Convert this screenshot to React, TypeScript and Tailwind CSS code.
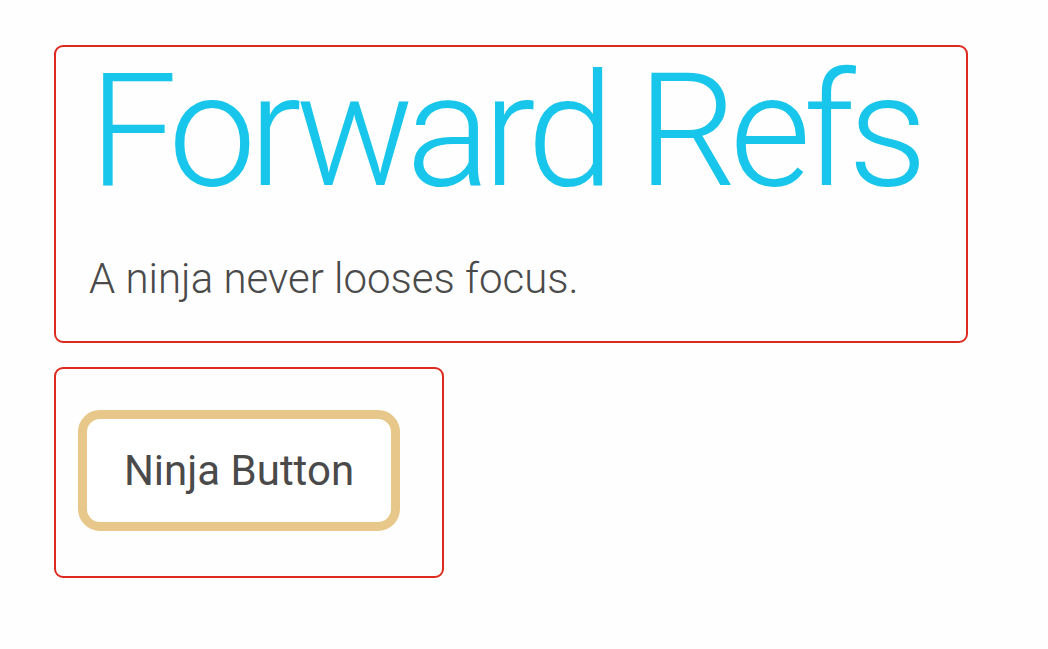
import React from "react";

export default function App() {
  return (
    <div className="min-h-[649px] w-[1048px] bg-[#fefefe] pt-[45px] pl-[54px]" style={{ fontFamily: "Roboto, 'Noto Sans', sans-serif" }}>
      <div className="w-[914px] h-[298px] rounded-[9px] border-2 border-[#dc2a1e] pl-[33px] pt-[6px]">
        <h1 className="whitespace-nowrap text-[157px] font-light leading-none tracking-[-7.5px] text-[#17c6ea]">Forward Refs</h1>
        <p className="mt-[48px] whitespace-nowrap text-[42px] font-light leading-none text-[#4a4a4a]">A ninja never looses focus.</p>
      </div>
      <div className="mt-[24px] w-[390px] h-[211px] rounded-[9px] border-2 border-[#dc2a1e] pl-[22px] pt-[41px]">
        <button className="flex h-[121px] w-[322px] items-center justify-center rounded-[22px] border-[9px] border-[#e8c88a] bg-white text-[42px] text-[#4a4a4a]">
          Ninja Button
        </button>
      </div>
    </div>
  );
}
